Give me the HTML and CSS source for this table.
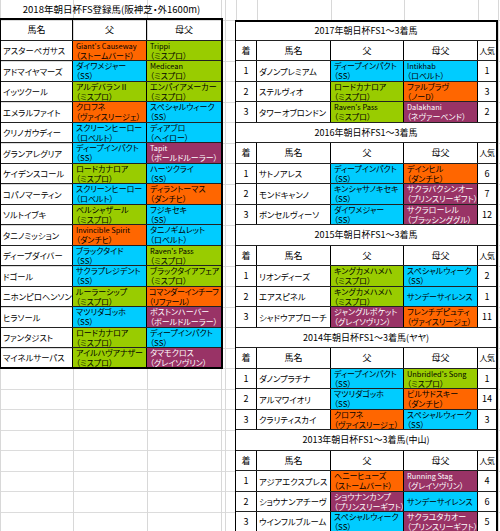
FILE: index.html
```html
<!DOCTYPE html>
<html lang="ja">
<head>
<meta charset="utf-8">
<title>2018年朝日杯FS登録馬</title>
<link rel="stylesheet" href="styles.css">
</head>
<body>
<div class="sheet">
  <section class="entries">
    <div class="sheet-title">2018年朝日杯FS登録馬(阪神芝・外1600m)</div>
    <div class="ltable">
      <div class="lrow head"><div class="c">馬名</div><div class="c">父</div><div class="c">母父</div></div>
      <div class="lrow"><div class="c name">アスターペガサス</div><div class="c two orange"><span class="en">Giant's Causeway</span><span>（ストームバード）</span></div><div class="c two green"><span class="en">Trippi</span><span>（ミスプロ）</span></div></div>
      <div class="lrow"><div class="c name">アドマイヤマーズ</div><div class="c two cyan"><span>ダイワメジャー</span><span>（SS）</span></div><div class="c two green"><span class="en">Medicean</span><span>（ミスプロ）</span></div></div>
      <div class="lrow"><div class="c name">イッツクール</div><div class="c two green"><span>アルデバランⅡ</span><span>（ミスプロ）</span></div><div class="c two green"><span>エンパイアメーカー</span><span>（ミスプロ）</span></div></div>
      <div class="lrow"><div class="c name">エメラルファイト</div><div class="c two orange"><span>クロフネ</span><span>（ヴァイスリージェ）</span></div><div class="c two cyan"><span>スペシャルウィーク</span><span>（SS）</span></div></div>
      <div class="lrow"><div class="c name">クリノガウディー</div><div class="c two cyan"><span>スクリーンヒーロー</span><span>（ロベルト）</span></div><div class="c two cyan"><span>ディアブロ</span><span>（ヘイロー）</span></div></div>
      <div class="lrow"><div class="c name">グランアレグリア</div><div class="c two cyan"><span>ディープインパクト</span><span>（SS）</span></div><div class="c two purple"><span class="en">Tapit</span><span>（ボールドルーラー）</span></div></div>
      <div class="lrow"><div class="c name">ケイデンスコール</div><div class="c two green"><span>ロードカナロア</span><span>（ミスプロ）</span></div><div class="c two cyan"><span>ハーツクライ</span><span>（SS）</span></div></div>
      <div class="lrow"><div class="c name">コパノマーティン</div><div class="c two cyan"><span>スクリーンヒーロー</span><span>（ロベルト）</span></div><div class="c two orange"><span>ディラントーマス</span><span>（ダンチヒ）</span></div></div>
      <div class="lrow"><div class="c name">ソルトイブキ</div><div class="c two green"><span>ベルシャザール</span><span>（ミスプロ）</span></div><div class="c two cyan"><span>フジキセキ</span><span>（SS）</span></div></div>
      <div class="lrow"><div class="c name">タニノミッション</div><div class="c two orange"><span class="en">Invincible Spirit</span><span>（ダンチヒ）</span></div><div class="c two cyan"><span>タニノギムレット</span><span>（ロベルト）</span></div></div>
      <div class="lrow"><div class="c name">ディープダイバー</div><div class="c two cyan"><span>ブラックタイド</span><span>（SS）</span></div><div class="c two green"><span class="en">Raven's Pass</span><span>（ミスプロ）</span></div></div>
      <div class="lrow"><div class="c name">ドゴール</div><div class="c two cyan"><span>サクラプレジデント</span><span>（SS）</span></div><div class="c two green"><span>ブラックタイアフェア</span><span>（ミスプロ）</span></div></div>
      <div class="lrow"><div class="c name">ニホンピロヘンソン</div><div class="c two green"><span>ルーラーシップ</span><span>（ミスプロ）</span></div><div class="c two orange tight"><span>コマンダーインチーフ</span><span>（リファール）</span></div></div>
      <div class="lrow"><div class="c name">ヒラソール</div><div class="c two cyan"><span>マツリダゴッホ</span><span>（SS）</span></div><div class="c two purple"><span>ボストンハーバー</span><span>（ボールドルーラー）</span></div></div>
      <div class="lrow"><div class="c name">ファンタジスト</div><div class="c two green"><span>ロードカナロア</span><span>（ミスプロ）</span></div><div class="c two cyan"><span>ディープインパクト</span><span>（SS）</span></div></div>
      <div class="lrow last"><div class="c name">マイネルサーパス</div><div class="c two green"><span>アイルハヴアナザー</span><span>（ミスプロ）</span></div><div class="c two purple"><span>タマモクロス</span><span>（グレイソヴリン）</span></div></div>
    </div>
  </section>

  <section class="results">
    <div class="rtitle first">2017年朝日杯FS1～3着馬</div>
    <div class="rrow head"><div class="c">着</div><div class="c">馬名</div><div class="c">父</div><div class="c">母父</div><div class="c">人気</div></div>
    <div class="rrow"><div class="c num">1</div><div class="c name">ダノンプレミアム</div><div class="c two cyan"><span>ディープインパクト</span><span>（SS）</span></div><div class="c two cyan"><span class="en">Intikhab</span><span>（ロベルト）</span></div><div class="c num">1</div></div>
    <div class="rrow"><div class="c num">2</div><div class="c name">ステルヴィオ</div><div class="c two green"><span>ロードカナロア</span><span>（ミスプロ）</span></div><div class="c two orange"><span>ファルブラヴ</span><span>（ノーD）</span></div><div class="c num">3</div></div>
    <div class="rrow"><div class="c num">3</div><div class="c name">タワーオブロンドン</div><div class="c two green"><span class="en">Raven's Pass</span><span>（ミスプロ）</span></div><div class="c two purple"><span class="en">Dalakhani</span><span>（ネヴァーベンド）</span></div><div class="c num">2</div></div>

    <div class="rtitle">2016年朝日杯FS1～3着馬</div>
    <div class="rrow head"><div class="c">着</div><div class="c">馬名</div><div class="c">父</div><div class="c">母父</div><div class="c">人気</div></div>
    <div class="rrow"><div class="c num">1</div><div class="c name">サトノアレス</div><div class="c two cyan"><span>ディープインパクト</span><span>（SS）</span></div><div class="c two orange"><span>デインヒル</span><span>（ダンチヒ）</span></div><div class="c num">6</div></div>
    <div class="rrow"><div class="c num">2</div><div class="c name">モンドキャンノ</div><div class="c two cyan"><span>キンシャサノキセキ</span><span>（SS）</span></div><div class="c two purple"><span>サクラバクシンオー</span><span>（プリンスリーギフト）</span></div><div class="c num">7</div></div>
    <div class="rrow"><div class="c num">3</div><div class="c name">ボンセルヴィーソ</div><div class="c two cyan"><span>ダイワメジャー</span><span>（SS）</span></div><div class="c two purple"><span>サクラローレル</span><span>（ブラッシンググル）</span></div><div class="c num">12</div></div>

    <div class="rtitle">2015年朝日杯FS1～3着馬</div>
    <div class="rrow head"><div class="c">着</div><div class="c">馬名</div><div class="c">父</div><div class="c">母父</div><div class="c">人気</div></div>
    <div class="rrow"><div class="c num">1</div><div class="c name">リオンディーズ</div><div class="c two green"><span>キングカメハメハ</span><span>（ミスプロ）</span></div><div class="c two cyan"><span>スペシャルウィーク</span><span>（SS）</span></div><div class="c num">2</div></div>
    <div class="rrow"><div class="c num">2</div><div class="c name">エアスピネル</div><div class="c two green"><span>キングカメハメハ</span><span>（ミスプロ）</span></div><div class="c one cyan">サンデーサイレンス</div><div class="c num">1</div></div>
    <div class="rrow"><div class="c num">3</div><div class="c name">シャドウアプローチ</div><div class="c two purple"><span>ジャングルポケット</span><span>（グレイソヴリン）</span></div><div class="c two orange"><span>フレンチデピュティ</span><span>（ヴァイスリージェ）</span></div><div class="c num">11</div></div>

    <div class="rtitle">2014年朝日杯FS1～3着馬(ヤヤ)</div>
    <div class="rrow head"><div class="c">着</div><div class="c">馬名</div><div class="c">父</div><div class="c">母父</div><div class="c">人気</div></div>
    <div class="rrow"><div class="c num">1</div><div class="c name">ダノンプラチナ</div><div class="c two cyan"><span>ディープインパクト</span><span>（SS）</span></div><div class="c two green"><span class="en">Unbridled's Song</span><span>（ミスプロ）</span></div><div class="c num">1</div></div>
    <div class="rrow"><div class="c num">2</div><div class="c name">アルマワイオリ</div><div class="c two cyan"><span>マツリダゴッホ</span><span>（SS）</span></div><div class="c two orange"><span>ビルサドスキー</span><span>（ダンチヒ）</span></div><div class="c num">14</div></div>
    <div class="rrow"><div class="c num">3</div><div class="c name">クラリティスカイ</div><div class="c two orange"><span>クロフネ</span><span>（ヴァイスリージェ）</span></div><div class="c two cyan"><span>スペシャルウィーク</span><span>（SS）</span></div><div class="c num">3</div></div>

    <div class="rtitle">2013年朝日杯FS1～3着馬(中山)</div>
    <div class="rrow head"><div class="c">着</div><div class="c">馬名</div><div class="c">父</div><div class="c">母父</div><div class="c">人気</div></div>
    <div class="rrow"><div class="c num">1</div><div class="c name">アジアエクスプレス</div><div class="c two orange"><span>ヘニーヒューズ</span><span>（ストームバード）</span></div><div class="c two purple"><span class="en">Running Stag</span><span>（グレイソヴリン）</span></div><div class="c num">4</div></div>
    <div class="rrow"><div class="c num">2</div><div class="c name">ショウナンアチーヴ</div><div class="c two purple"><span>ショウナンカンプ</span><span>（プリンスリーギフト）</span></div><div class="c one cyan">サンデーサイレンス</div><div class="c num">6</div></div>
    <div class="rrow last"><div class="c num">3</div><div class="c name">ウインフルブルーム</div><div class="c two cyan"><span>スペシャルウィーク</span><span>（SS）</span></div><div class="c two purple"><span>サクラユタカオー</span><span>（プリンスリーギフト）</span></div><div class="c num">5</div></div>
  </section>
</div>
</body>
</html>
```

FILE: styles.css
```css
* { box-sizing: border-box; }

html, body {
  margin: 0;
  padding: 0;
}

body {
  width: 500px;
  height: 531px;
  overflow: hidden;
  font-family: "Noto Sans CJK JP", "Noto Sans", sans-serif;
  font-feature-settings: "palt" 1;
  color: #000;
  background-color: #fff;
  background-image:
    linear-gradient(#d8d8d8, #d8d8d8),
    linear-gradient(#d8d8d8, #d8d8d8),
    linear-gradient(#d8d8d8, #d8d8d8),
    linear-gradient(#d8d8d8, #d8d8d8),
    linear-gradient(#d8d8d8, #d8d8d8),
    linear-gradient(#d8d8d8, #d8d8d8),
    linear-gradient(#d8d8d8, #d8d8d8),
    linear-gradient(#d8d8d8, #d8d8d8),
    linear-gradient(#d8d8d8, #d8d8d8),
    linear-gradient(#d8d8d8, #d8d8d8),
    linear-gradient(#d8d8d8, #d8d8d8),
    repeating-linear-gradient(to bottom, transparent 0 19.5px, #dcdcdc 19.5px 20.5px);
  background-repeat: no-repeat;
  background-size:
    1px 100%, 1px 100%, 1px 100%, 1px 100%, 1px 100%, 1px 100%,
    1px 100%, 1px 100%, 1px 100%, 1px 100%, 1px 100%, 100% 100%;
  background-position:
    0 0, 73px 0, 147px 0, 221px 0, 225px 0, 236px 0,
    257px 0, 331px 0, 404px 0, 478px 0, 498px 0, 0 0;
}

.sheet {
  display: flex;
  align-items: flex-start;
  gap: 12px;
}

/* ---------- left: entries ---------- */
.entries {
  width: 223px;
  flex: none;
}

.sheet-title {
  height: 20px;
  border-bottom: 2px solid #000;
  font-size: 9.5px;
  line-height: 18px;
  text-align: center;
  white-space: nowrap;
}

.ltable {
  border-left: 1px solid #000;
  border-right: 2px solid #000;
}

.lrow {
  display: grid;
  grid-template-columns: 72px 74px 74px;
  height: 20.5px;
  border-bottom: 1px solid #222;
}

.lrow.last { border-bottom: 2px solid #000; }

/* ---------- cells ---------- */
.c {
  border-right: 1px solid #000;
  overflow: hidden;
  white-space: nowrap;
  font-size: 8px;
  display: flex;
  align-items: center;
  padding-left: 2px;
}

.lrow .c:last-child,
.rrow .c:last-child { border-right: none; }

.head .c {
  justify-content: center;
  padding-left: 0;
  font-size: 9px;
}

.rrow.head .c:last-child { font-size: 8px; letter-spacing: -0.5px; }

.name { font-size: 8.3px; }

.two {
  flex-direction: column;
  align-items: flex-start;
  justify-content: center;
  line-height: 9.6px;
  padding-left: 3px;
  padding-top: 0.5px;
}

.two span { display: block; }

.two.tight { padding-left: 2px; letter-spacing: -0.3px; }

.one { padding-left: 3px; }

.en { font-size: 7.4px; }

.num {
  justify-content: center;
  padding-left: 0;
  font-size: 9px;
}

.orange { background: #ff6600; }
.green  { background: #99cc00; }
.cyan   { background: #00ccff; }
.purple { background: #993366; color: #fff; }

/* ---------- right: results ---------- */
.results {
  width: 263px;
  flex: none;
  margin-top: 20px;
  border-left: 1px solid #000;
  border-right: 2px solid #000;
  background: #fff;
}

.rtitle {
  height: 20.5px;
  border-bottom: 1px solid #222;
  font-size: 9px;
  line-height: 19.5px;
  text-align: center;
  white-space: nowrap;
}

.rtitle.first {
  border-top: 2px solid #000;
  line-height: 17.5px;
}

.rrow {
  display: grid;
  grid-template-columns: 21px 74px 73px 74px 18px;
  height: 20.5px;
  border-bottom: 1px solid #222;
}

.rrow.last { border-bottom: 2px solid #000; }

.rrow .name { padding-left: 2px; }
```
